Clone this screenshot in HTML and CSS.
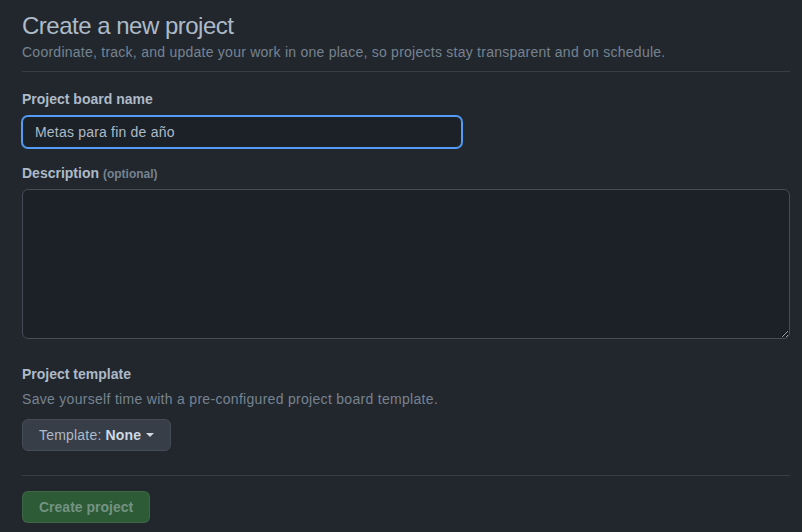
FILE: index.html
```html
<!DOCTYPE html>
<html lang="en">
<head>
<meta charset="utf-8">
<title>Create a new project</title>
<link rel="stylesheet" href="styles.css">
</head>
<body>
<main class="page">
  <header class="page-head">
    <h1 class="title">Create a new project</h1>
    <p class="subtitle">Coordinate, track, and update your work in one place, so projects stay transparent and on schedule.</p>
  </header>
  <form class="form">
    <div class="field field-name">
      <label class="label" for="name">Project board name</label>
      <input class="input" id="name" type="text" value="Metas para fin de año">
    </div>
    <div class="field field-desc">
      <label class="label" for="desc">Description <span class="optional">(optional)</span></label>
      <textarea class="textarea" id="desc"></textarea>
    </div>
    <div class="field field-template">
      <div class="label">Project template</div>
      <p class="help">Save yourself time with a pre-configured project board template.</p>
      <button type="button" class="btn btn-template">Template: <strong>None</strong><span class="caret"></span></button>
    </div>
    <div class="actions">
      <button type="button" class="btn btn-primary" disabled>Create project</button>
    </div>
  </form>
</main>
</body>
</html>
```
FILE: styles.css
```css
* { box-sizing: border-box; }
html, body {
  margin: 0;
  background: #22272e;
}
body {
  font-family: "Liberation Sans", Arial, sans-serif;
  font-size: 14px;
  line-height: 21px;
  color: #adbac7;
}
.page {
  width: 790px;
  padding: 11px 0 0 22px;
}
.page-head {
  padding-bottom: 8px;
  border-bottom: 1px solid #373e47;
}
.title {
  margin: 0;
  font-size: 24px;
  line-height: 30px;
  font-weight: 400;
  letter-spacing: -0.5px;
  color: #adbac7;
}
.subtitle {
  margin: 1px 0 0;
  letter-spacing: 0.25px;
  color: #768390;
}
.form {
  display: flex;
  flex-direction: column;
}
.field {
  display: flex;
  flex-direction: column;
  align-items: flex-start;
}
.field-name { margin-top: 17px; }
.field-desc { margin-top: 15px; }
.field-template { margin-top: 25px; }
.label {
  font-weight: 700;
  color: #adbac7;
}
.optional {
  font-size: 12px;
  color: #768390;
}
.input {
  margin-top: 6px;
  width: 440px;
  height: 32px;
  padding: 0 12px;
  font: inherit;
  letter-spacing: 0.2px;
  color: #adbac7;
  background: #1c2128;
  border: 1px solid #539bf5;
  border-radius: 6px;
  box-shadow: 0 0 0 1px #539bf5;
  outline: none;
}
.textarea {
  display: block;
  margin-top: 4px;
  width: 768px;
  height: 150px;
  font: inherit;
  color: #adbac7;
  background: #1c2128;
  border: 1px solid #444c56;
  border-radius: 6px;
  resize: vertical;
  outline: none;
}
.help {
  margin: 4px 0 0;
  letter-spacing: 0.3px;
  color: #768390;
}
.btn {
  height: 32px;
  padding: 0 16px;
  font: inherit;
  font-weight: 500;
  border-radius: 6px;
  display: inline-flex;
  align-items: center;
}
.btn-template {
  margin-top: 9px;
  letter-spacing: 0.2px;
  color: #adbac7;
  background: #373e47;
  border: 1px solid #444c56;
}
.btn-template strong {
  margin-left: 4px;
  font-weight: 700;
  color: #cdd9e5;
}
.caret {
  display: inline-block;
  margin-left: 5px;
  width: 0;
  height: 0;
  border-left: 4px solid transparent;
  border-right: 4px solid transparent;
  border-top: 4px solid #cdd9e5;
}
.actions {
  margin-top: 24px;
  padding-top: 15px;
  border-top: 1px solid #373e47;
}
.btn-primary {
  font-weight: 700;
  color: rgba(205, 217, 229, 0.45);
  background: #2d5b35;
  border: 1px solid rgba(205, 217, 229, 0.1);
}
```
